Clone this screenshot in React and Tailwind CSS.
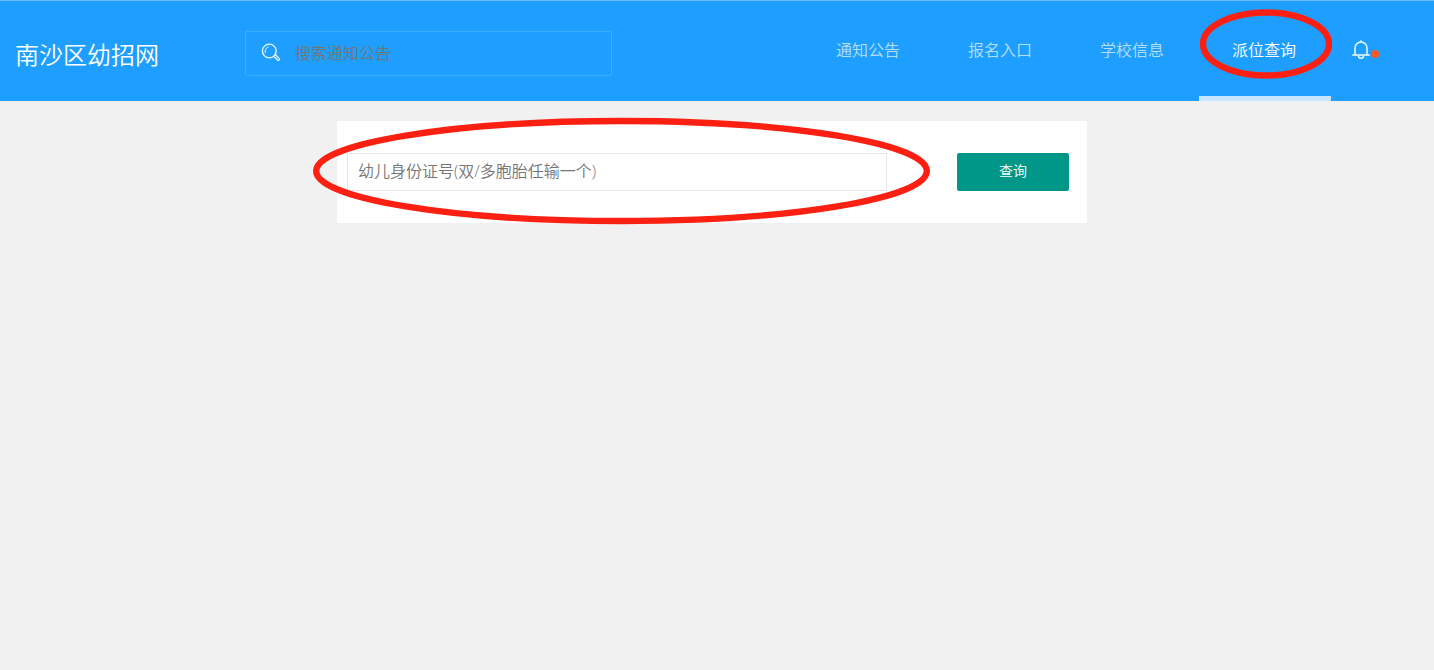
import { useState } from 'react';

const navItems = [
    { label: '通知公告', href: '#notice' },
    { label: '报名入口', href: '#apply' },
    { label: '学校信息', href: '#school' },
    { label: '派位查询', href: '#query' },
];

const SearchIcon = () => (
    <svg className="w-5 h-5 shrink-0" viewBox="0 0 20 20" fill="none" stroke="#e3f7ff" aria-hidden="true">
        <circle cx="8.3" cy="8" r="6.9" strokeWidth="1.4" />
        <path d="M7.2 3.9A4.6 4.6 0 0 0 4.2 9.6" strokeWidth="1" strokeLinecap="round" />
        <path d="M12.9 13.2l1.6-1.4 3.6 3.6a1.1 1.1 0 0 1-1.6 1.6z" strokeWidth="1.3" strokeLinejoin="round" />
    </svg>
);

const BellIcon = () => (
    <svg className="w-5 h-5" viewBox="0 0 20 20" fill="none" stroke="#e3f7ff" aria-hidden="true">
        <path d="M4 15V8a6 6 0 0 1 12 0v7" strokeWidth="1.6" />
        <path d="M1.2 15h17.6" strokeWidth="1.6" />
        <path d="M7.4 15.4a2.6 2.8 0 0 0 5.2 0" strokeWidth="1.5" />
        <path d="M10 2V.4" strokeWidth="1.8" />
    </svg>
);

const Header = () => {
    const [keyword, setKeyword] = useState('');
    const [active, setActive] = useState('派位查询');

    return (
        <header className="flex items-stretch h-[101px] bg-[#1e9fff] border-t border-[#70b6ee]">
            <h1 className="w-[245px] shrink-0 pl-[15px] pt-9 text-2xl leading-9 text-white">南沙区幼招网</h1>

            {/* Search */}
            <form
                onSubmit={(e) => e.preventDefault()}
                className="flex items-center w-[367px] h-[45px] mt-[30px] pl-[15px] pr-4 pb-0.5 gap-3 border border-[#3dadff] rounded-xs"
            >
                <SearchIcon />
                <input
                    type="text"
                    aria-label="搜索通知公告"
                    value={keyword}
                    onChange={(e) => setKeyword(e.target.value)}
                    placeholder="搜索通知公告"
                    className="flex-1 min-w-0 h-10 pl-0.5 bg-transparent text-base text-white placeholder:text-[#757575] outline-none"
                />
            </form>

            {/* Navigation */}
            <nav className="flex ml-auto">
                {navItems.map((item) => (
                    <a
                        key={item.label}
                        href={item.href}
                        onClick={() => setActive(item.label)}
                        className={`relative w-[132px] pl-[33px] pt-[35px] text-base leading-7 border-b-5 ${
                            active === item.label
                                ? 'text-white border-[#c7e6fd]'
                                : 'text-[#b5dffb] border-transparent'
                        }`}
                    >
                        {item.label}
                        {item.href === '#query' && (
                            <svg
                                className="absolute left-px top-2 w-[132px] h-[70px] pointer-events-none"
                                viewBox="0 0 132 70"
                                aria-hidden="true"
                            >
                                <ellipse cx="66" cy="35" rx="63" ry="31.5" fill="none" stroke="#fb2012" strokeWidth="6.4" />
                            </svg>
                        )}
                    </a>
                ))}
            </nav>

            <button type="button" aria-label="消息" className="flex items-center h-7 mt-[35px] ml-5 mr-[55px]">
                <BellIcon />
                <span className="w-2 h-2 mt-2 rounded-full bg-[#ff5722]" />
            </button>
        </header>
    );
};

const QueryForm = () => {
    const [idNumber, setIdNumber] = useState('');

    return (
        <form
            onSubmit={(e) => e.preventDefault()}
            className="relative flex items-center justify-between w-full max-w-[750px] mx-auto pl-[10px] pr-[18px] py-8 bg-white"
        >
            <input
                type="text"
                aria-label="幼儿身份证号"
                value={idNumber}
                onChange={(e) => setIdNumber(e.target.value)}
                placeholder="幼儿身份证号(双/多胞胎任输一个)"
                className="w-[540px] h-[38px] px-[10px] pb-0.5 border border-[#e6e6e6] text-base text-[#333] placeholder:text-[#757575] outline-none"
            />
            <button type="submit" className="w-28 h-[38px] pb-0.5 rounded-xs bg-[#009688] text-sm text-white">
                查询
            </button>
            <svg
                className="absolute -left-6 -top-1 w-[618px] h-[108px] pointer-events-none"
                viewBox="0 0 618 108"
                aria-hidden="true"
            >
                <ellipse cx="308.5" cy="54" rx="305.3" ry="50" fill="none" stroke="#fb2012" strokeWidth="6.4" />
            </svg>
        </form>
    );
};

const App = () => {
    return (
        <div className="min-h-screen bg-[#f1f1f1] font-['Open_Sans','Noto_Sans_CJK_SC',sans-serif] font-[350]">
            <Header />
            <main className="pt-5 pr-[10px]">
                <QueryForm />
            </main>
        </div>
    );
};

export default App;
